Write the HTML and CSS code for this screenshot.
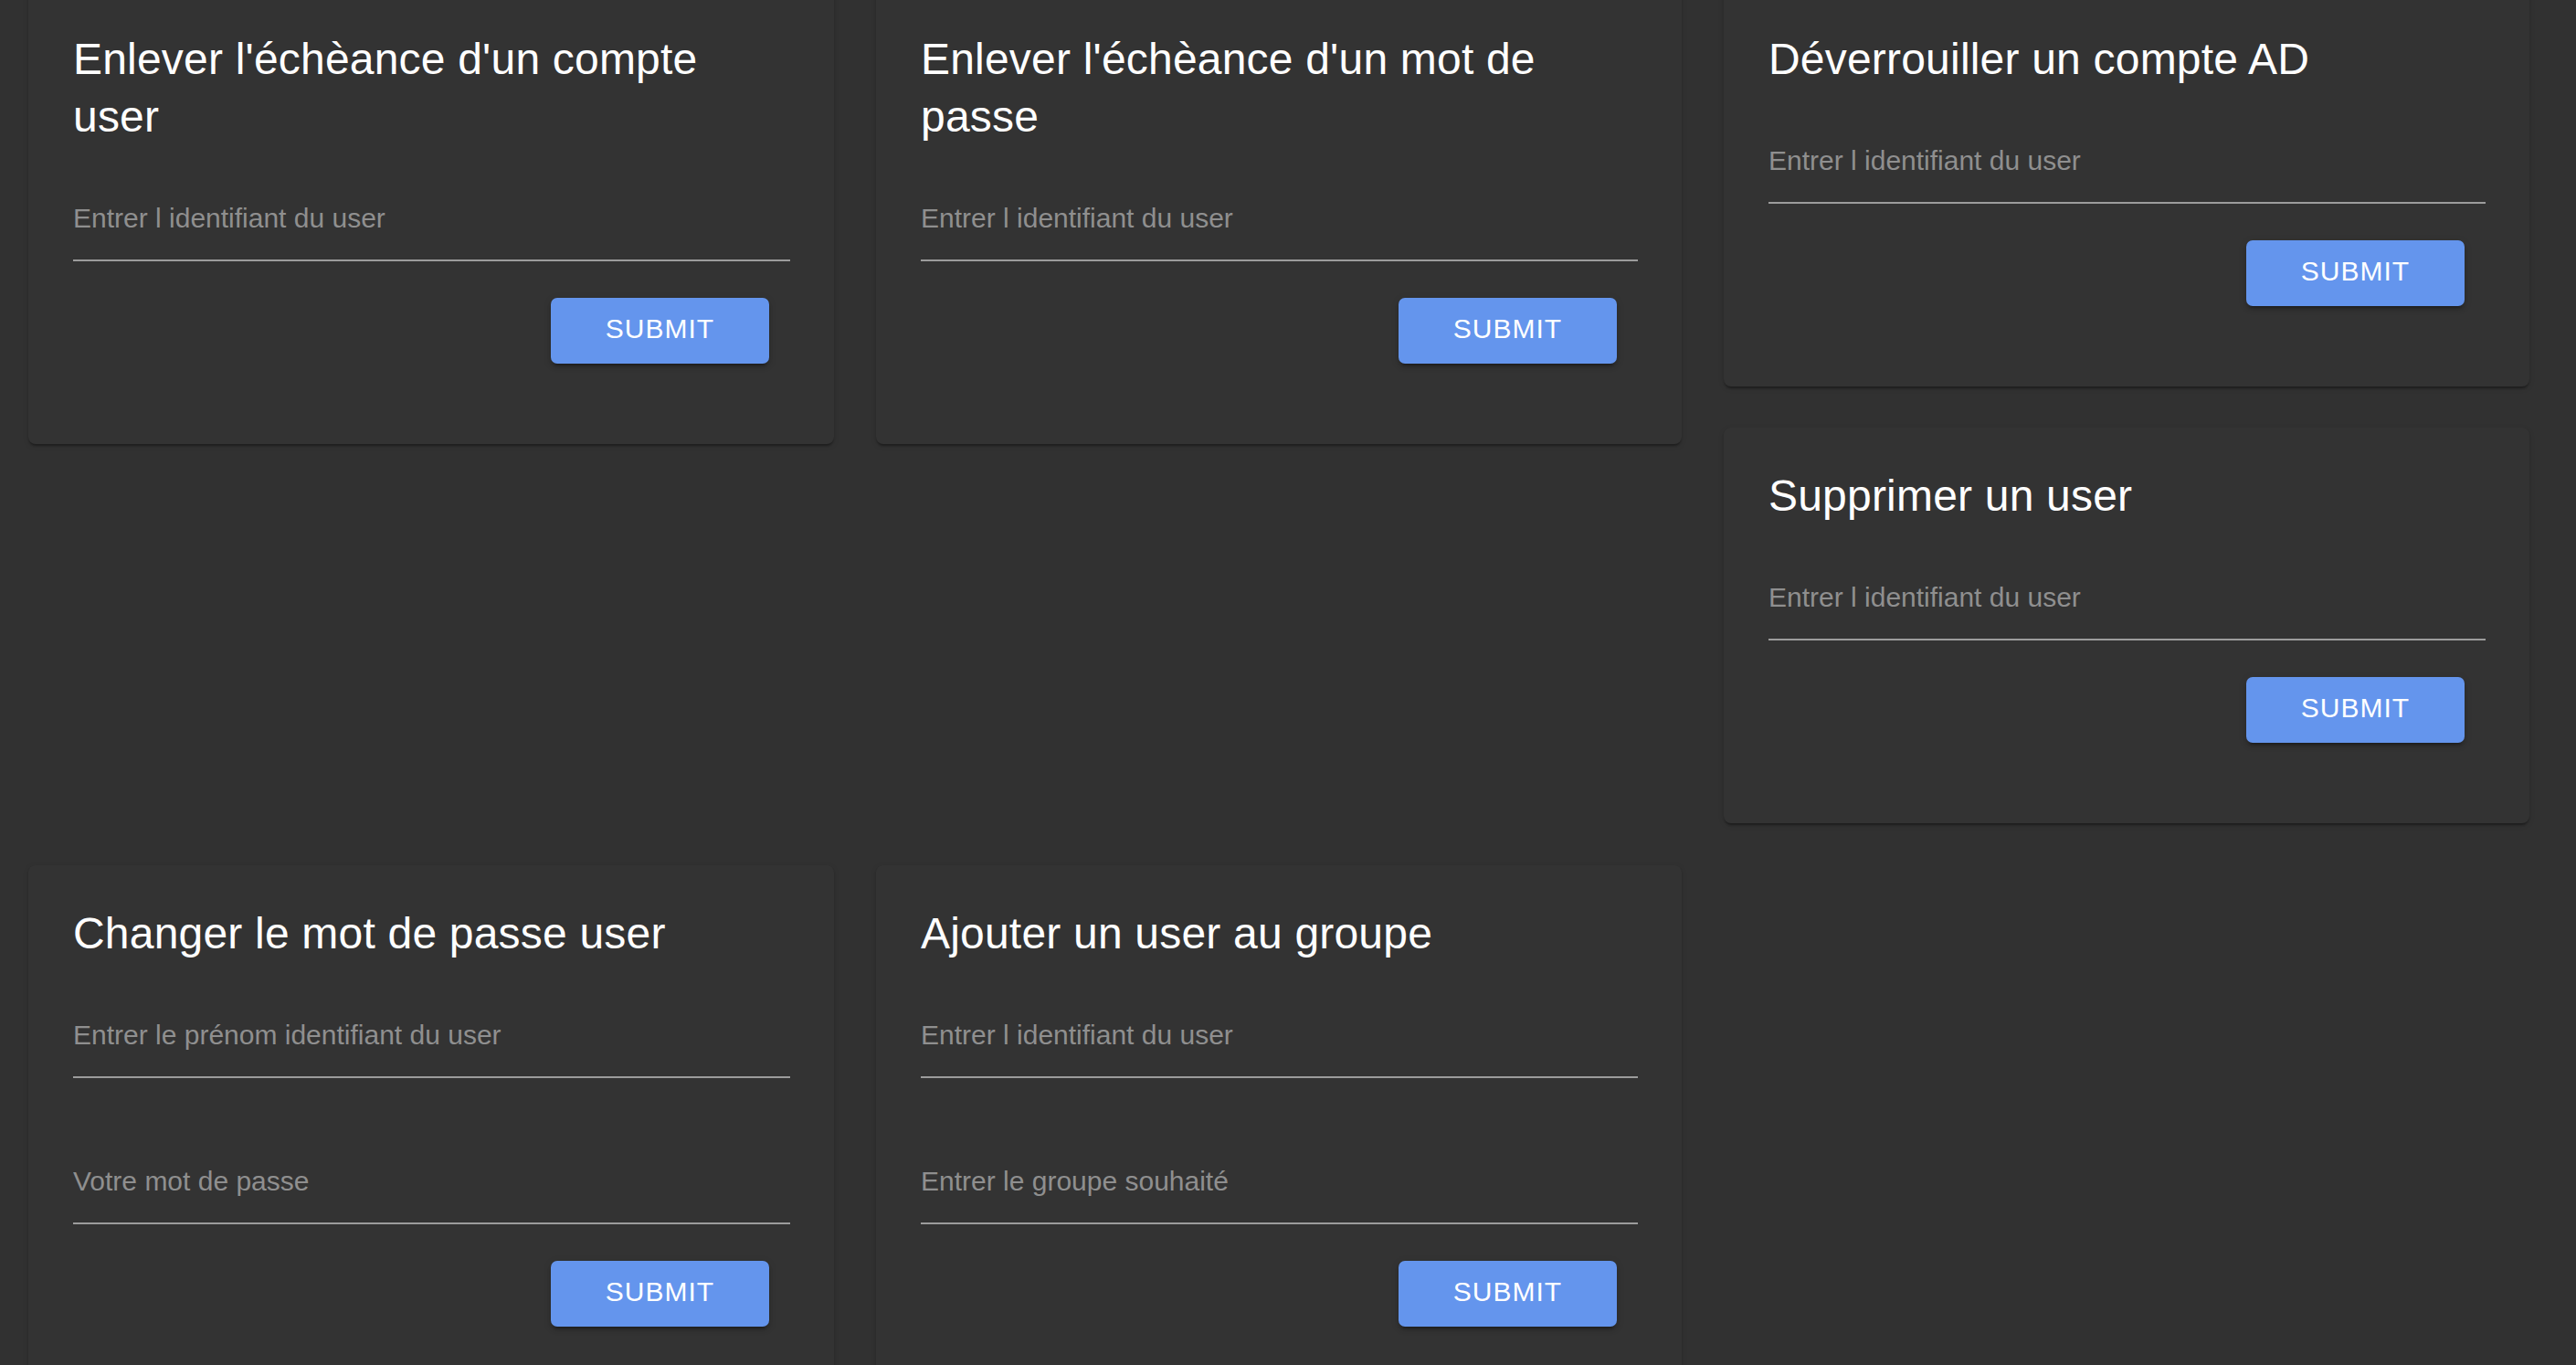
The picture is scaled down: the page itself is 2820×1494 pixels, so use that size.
FILE: index.html
```html
<!DOCTYPE html>
<html lang="fr">
<head>
<meta charset="utf-8">
<title>Administration AD</title>
<link rel="stylesheet" href="styles.css">
</head>
<body>
<main class="grid">
  <section class="card">
    <h2 class="card-title">Enlever l'échèance d'un compte user</h2>
    <form class="card-form">
      <input class="field" type="text" placeholder="Entrer l identifiant du user">
      <div class="actions"><button type="button" class="btn">SUBMIT</button></div>
    </form>
  </section>

  <section class="card">
    <h2 class="card-title">Enlever l'échèance d'un mot de passe</h2>
    <form class="card-form">
      <input class="field" type="text" placeholder="Entrer l identifiant du user">
      <div class="actions"><button type="button" class="btn">SUBMIT</button></div>
    </form>
  </section>

  <div class="stack">
    <section class="card">
      <h2 class="card-title">Déverrouiller un compte AD</h2>
      <form class="card-form">
        <input class="field" type="text" placeholder="Entrer l identifiant du user">
        <div class="actions"><button type="button" class="btn">SUBMIT</button></div>
      </form>
    </section>
    <section class="card">
      <h2 class="card-title">Supprimer un user</h2>
      <form class="card-form">
        <input class="field" type="text" placeholder="Entrer l identifiant du user">
        <div class="actions"><button type="button" class="btn">SUBMIT</button></div>
      </form>
    </section>
  </div>

  <section class="card">
    <h2 class="card-title">Changer le mot de passe user</h2>
    <form class="card-form">
      <input class="field" type="text" placeholder="Entrer le prénom identifiant du user">
      <input class="field" type="password" placeholder="Votre mot de passe">
      <div class="actions"><button type="button" class="btn">SUBMIT</button></div>
    </form>
  </section>

  <section class="card">
    <h2 class="card-title">Ajouter un user au groupe</h2>
    <form class="card-form">
      <input class="field" type="text" placeholder="Entrer l identifiant du user">
      <input class="field" type="text" placeholder="Entrer le groupe souhaité">
      <div class="actions"><button type="button" class="btn">SUBMIT</button></div>
    </form>
  </section>
</main>
</body>
</html>
```

FILE: styles.css
```css
html, body {
  margin: 0;
  padding: 0;
  background: #313131;
}

body {
  font-family: "Liberation Sans", Arial, Helvetica, sans-serif;
  color: #ffffff;
}

.grid {
  display: grid;
  grid-template-columns: 882px 882px 882px;
  column-gap: 46px;
  row-gap: 46px;
  align-items: start;
  padding-left: 31px;
  margin-top: -10px;
}

.stack {
  display: flex;
  flex-direction: column;
  gap: 45px;
}

.card {
  background: #333333;
  border-radius: 8px;
  padding: 43px 48px 88px 49px;
  box-shadow: 0 4px 2px -2px rgba(0, 0, 0, 0.2),
              0 2px 2px 0 rgba(0, 0, 0, 0.14),
              0 2px 6px 0 rgba(0, 0, 0, 0.12);
}

.card-title {
  margin: 0;
  font-size: 48px;
  line-height: 63px;
  font-weight: 400;
  letter-spacing: 0.2px;
  color: #ffffff;
}

.card-form {
  display: flex;
  flex-direction: column;
  margin: 0;
}

.field {
  display: block;
  box-sizing: content-box;
  width: 100%;
  height: 36px;
  margin: 95px 0 0;
  padding: 0 0 27px;
  border: none;
  border-bottom: 2px solid #9c9c9c;
  background: transparent;
  font-family: "Liberation Sans", Arial, Helvetica, sans-serif;
  font-size: 30px;
  line-height: 36px;
  color: #ffffff;
  outline: none;
}

.field:first-child {
  margin-top: 62px;
}

.field::placeholder {
  color: #8f8f8f;
  opacity: 1;
}

.actions {
  display: flex;
  justify-content: flex-end;
  padding-top: 40px;
  padding-right: 23px;
}

.btn {
  display: flex;
  align-items: center;
  justify-content: center;
  box-sizing: border-box;
  width: 239px;
  height: 72px;
  padding: 0 0 4px;
  border: none;
  border-radius: 7px;
  background: #6495ed;
  color: #ffffff;
  font-family: "Liberation Sans", Arial, Helvetica, sans-serif;
  font-size: 30px;
  font-weight: 400;
  letter-spacing: 1px;
  box-shadow: 0 6px 2px -4px rgba(0, 0, 0, 0.2),
              0 4px 4px 0 rgba(0, 0, 0, 0.14),
              0 2px 10px 0 rgba(0, 0, 0, 0.12);
  cursor: pointer;
}
```
